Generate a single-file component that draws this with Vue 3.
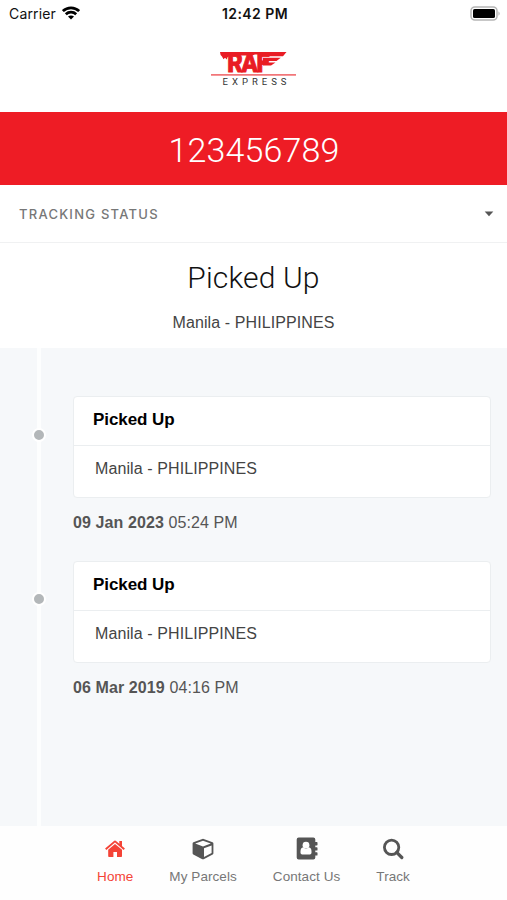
<script setup>
const events = [
  { status: 'Picked Up', place: 'Manila - PHILIPPINES', date: '09 Jan 2023', time: '05:24 PM' },
  { status: 'Picked Up', place: 'Manila - PHILIPPINES', date: '06 Mar 2019', time: '04:16 PM' },
]
</script>

<template>
  <div class="screen">
    <header class="statusbar">
      <div class="carrier">
        <span>Carrier</span>
        <svg width="18" height="14" viewBox="0 0 18 14">
          <g fill="none" stroke="#000" stroke-width="2.7">
            <path d="M0.9 5.1C5.4 0.7 12.6 0.7 17.1 5.1" />
            <path d="M3.8 8.3C6.7 5.5 11.3 5.5 14.2 8.3" />
          </g>
          <path d="M9 13.6L6 10.6C7.5 9.1 10.5 9.1 12 10.6Z" />
        </svg>
      </div>
      <div class="clock">12:42 PM</div>
      <svg class="battery" width="31" height="15" viewBox="0 0 31 15">
        <rect x="1" y="1" width="26" height="13" rx="3.8" fill="#fff" stroke="#b5b5b5" stroke-width="1.5" />
        <rect x="3" y="3" width="22" height="9" rx="1.6" />
        <path d="M28.5 5.2Q30.8 7.5 28.5 9.8Z" fill="#aaa" />
      </svg>
    </header>

    <div class="brand">
      <svg width="86" height="38" viewBox="0 0 86 38">
        <g fill="#e91c24">
          <path d="M9 3H75.5L72 7.2H55V5.5H44L41 6.5H19L16.5 8.3L15.8 10.5L14 8.8L12.5 10.2L11 7.4Q9 6 9 3Z" />
          <path d="M52 8.8H69.8L65.5 12H52Z" />
          <path d="M52 13.6H64.5L60 16.4H52Z" />
          <text class="mark" x="16.2" y="23.2" textLength="41" lengthAdjust="spacingAndGlyphs">RAF</text>
        </g>
        <rect y="25.2" width="85" height="1.4" fill="#ee5559" />
        <text class="sub" x="11.5" y="36" textLength="64">EXPRESS</text>
      </svg>
    </div>

    <div class="number">123456789</div>

    <div class="section">
      <span>TRACKING STATUS</span>
      <svg width="10" height="6" viewBox="0 0 10 6"><path d="M0.7 0.6H9.3L5 5.2Z" fill="#555" /></svg>
    </div>

    <div class="summary">
      <h1>Picked Up</h1>
      <p>Manila - PHILIPPINES</p>
    </div>

    <main class="timeline">
      <div class="rail"></div>
      <article v-for="e in events" :key="e.date" class="event">
        <div class="dot"></div>
        <div class="detail">
          <div class="card">
            <h2>{{ e.status }}</h2>
            <p>{{ e.place }}</p>
          </div>
          <div class="when"><b>{{ e.date }}</b> {{ e.time }}</div>
        </div>
      </article>
    </main>

    <nav class="tabs">
      <a class="tab home">
        <svg width="22" height="24" viewBox="0 0 22 24" fill="currentColor">
          <path d="M11 7L18 12.8V19.2Q18 20 17.2 20H13V15H9.4V20H5Q4.2 20 4.2 19.2V12.8Z" />
          <path d="M1.7 12.3L10.3 4.9Q11 4.3 11.7 4.9L20.3 12.3" fill="none" stroke="currentColor" stroke-width="1.9" />
          <path d="M15.3 4H18V9.8L15.3 7.4Z" />
        </svg>
        <span>Home</span>
      </a>
      <a class="tab parcels">
        <svg width="22" height="24" viewBox="0 0 22 24" fill="currentColor">
          <path fill-rule="evenodd" d="M11 1.8L20.6 5.2Q21.4 5.5 21.4 6.4V16.2Q21.4 17 20.7 17.4L11.7 22.2Q11 22.5 10.3 22.2L1.3 17.4Q.6 17 .6 16.2V6.4Q.6 5.5 1.4 5.2ZM11 3.7L3.2 6.5L11 9.4L18.8 6.5ZM12 11.2V19.9L19.6 15.9V8.4Z" />
        </svg>
        <span>My Parcels</span>
      </a>
      <a class="tab contact">
        <svg width="22" height="24" viewBox="0 0 22 24" fill="currentColor">
          <path d="M2.7 .6H17.3Q19.3 .6 19.3 2.6V5H20.8Q21.5 5 21.5 5.7V7.7Q21.5 8.4 20.8 8.4H19.3V10.2H20.8Q21.5 10.2 21.5 10.9V12.9Q21.5 13.6 20.8 13.6H19.3V15.2H20.8Q21.5 15.2 21.5 15.9V17.9Q21.5 18.6 20.8 18.6H19.3V20.5Q19.3 22.5 17.3 22.5H2.7Q.7 22.5 .7 20.5V2.6Q.7 .6 2.7 .6Z" />
          <g fill="#fff">
            <circle cx="10" cy="8.2" r="3.4" />
            <path d="M7.2 10.3Q10 13.2 12.8 10.3Q15.5 10.7 15.5 14.5V15.8Q15.5 17.5 13.8 17.5H6.2Q4.5 17.5 4.5 15.8V14.5Q4.5 10.7 7.2 10.3Z" />
          </g>
        </svg>
        <span>Contact Us</span>
      </a>
      <a class="tab track">
        <svg width="22" height="24" viewBox="0 0 22 24" fill="none" stroke="currentColor">
          <circle cx="9.6" cy="10.3" r="7.2" stroke-width="2.8" />
          <path d="M14.7 15.4L19.8 20.5" stroke-width="3.2" stroke-linecap="round" />
        </svg>
        <span>Track</span>
      </a>
    </nav>
  </div>
</template>

<style>
body { background: #fff; }
</style>

<style scoped>
.screen {
  width: 507px;
  height: 900px;
  display: flex;
  flex-direction: column;
  overflow: hidden;
  background: #fff;
  font-family: "Liberation Sans", Arial, sans-serif;
}
h1, h2, p { margin: 0; font-weight: 400; }
svg { display: block; flex: none; }
.statusbar {
  height: 28px;
  display: grid;
  grid-template-columns: 1fr auto 1fr;
  align-items: center;
  padding: 0 6px 0 9px;
  box-sizing: border-box;
  font-family: Inter, sans-serif;
  color: #111;
}
.carrier { display: flex; align-items: center; gap: 6px; font-size: 14px; letter-spacing: 0.15px; }
.carrier span { margin-bottom: 1px; }
.carrier svg { margin-bottom: 2px; }
.clock { font-size: 14px; font-weight: 600; letter-spacing: 0.45px; margin-bottom: 1px; }
.battery { justify-self: end; margin-bottom: 1px; }
.brand { height: 84px; display: flex; justify-content: center; padding-top: 21px; box-sizing: border-box; }
.mark { font: 900 26px Roboto, sans-serif; letter-spacing: -1.5px; stroke: #e91c24; stroke-width: 0.8px; }
.sub { font: 400 9.5px Roboto, sans-serif; fill: #333; }
.number {
  height: 73px;
  background: #ee1c25;
  color: #fff;
  text-align: center;
  font: 300 34px/77px Roboto, sans-serif;
  letter-spacing: 0.15px;
  text-indent: 1px;
}
.section {
  height: 58px;
  box-sizing: border-box;
  border-bottom: 1px solid #f0f1f2;
  display: flex;
  align-items: center;
  justify-content: space-between;
  padding: 0 13px 0 19px;
  font: 500 13px Inter, sans-serif;
  letter-spacing: 1.25px;
  color: #777;
}
.summary { height: 105px; text-align: center; }
.summary h1 { font: 300 30px/36px Roboto, sans-serif; padding-top: 17px; color: #111; letter-spacing: 0.15px; }
.summary p { font-size: 16px; line-height: 20px; padding-top: 17px; color: #444; letter-spacing: 0.1px; }
.timeline {
  height: 478px;
  background: #f6f8fa;
  position: relative;
  padding: 48px 16px 0 0;
  box-sizing: border-box;
}
.rail { position: absolute; left: 37px; top: 0; bottom: 0; width: 4px; background: #fdfefe; }
.event { display: flex; height: 164.5px; position: relative; }
.dot {
  width: 10px;
  height: 10px;
  border: 2px solid #fff;
  border-radius: 50%;
  background: #b3b7b9;
  margin: 31.5px 27px 0 32px;
  flex: none;
}
.detail { flex: 1; }
.card { height: 102px; box-sizing: border-box; background: #fff; border: 1px solid #ebeef0; border-radius: 4px; }
.card h2 { height: 48px; border-bottom: 1px solid #ebeef0; font-size: 17px; font-weight: 700; line-height: 46px; padding-left: 19px; color: #000; letter-spacing: -0.08px; }
.card p { font-size: 16px; line-height: 46px; padding-left: 21px; color: #444; letter-spacing: 0.1px; }
.when { font-size: 16px; line-height: 20px; padding-top: 15px; color: #555; letter-spacing: 0.1px; }
.tabs { flex: 1; display: flex; justify-content: center; gap: 36px; padding-top: 11px; background: #fefefe; color: #555; }
.tab { display: flex; flex-direction: column; align-items: center; gap: 8px; font-size: 13.5px; line-height: 16px; letter-spacing: 0.07px; }
.tab span { color: #777; }
.home, .home span { color: #f44336; }
</style>
